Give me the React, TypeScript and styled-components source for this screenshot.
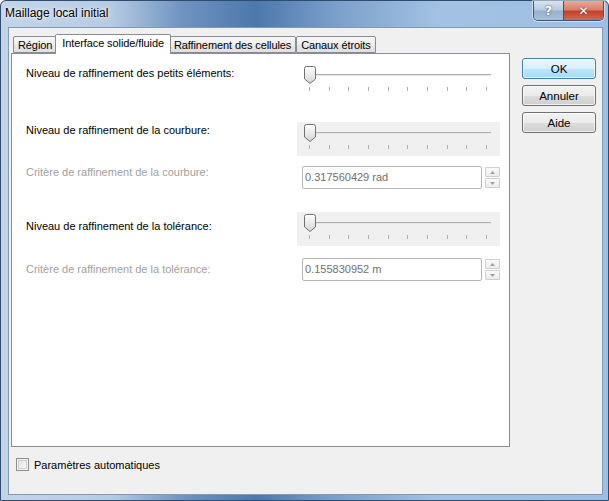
import React from "react";
import styled, { createGlobalStyle } from "styled-components";

const Global = createGlobalStyle`
  html, body { margin: 0; padding: 0; width: 609px; height: 501px; overflow: hidden; }
  body { font-family: "Liberation Sans", Arial, sans-serif; font-size: 11px; color: #000; }
  * { box-sizing: border-box; }
`;

const Window = styled.div`
  width: 609px;
  height: 501px;
  display: flex;
  flex-direction: column;
  background: linear-gradient(90deg, #c3d4e8 0%, #b6cbe3 18%, #6e93c0 30%, #4d78ad 42%, #7a9fca 55%, #a3c2e3 72%, #9dbfe3 100%);
  border: 1px solid #2f4b70;
  border-radius: 6px 6px 0 0;
`;

const TitleBar = styled.div`
  height: 26px;
  display: flex;
  align-items: flex-start;
  justify-content: space-between;
  padding-left: 4px;
  padding-right: 4px;
`;

const Title = styled.div`
  font-family: "Liberation Sans", Arial, sans-serif;
  font-size: 12px;
  color: #000;
  margin-top: 5px;
  text-shadow: 0 0 6px rgba(255,255,255,0.9), 0 0 3px rgba(255,255,255,0.9);
`;

const CaptionGroup = styled.div`
  display: flex;
  border: 1px solid #3a5677;
  border-top: none;
  border-radius: 0 0 5px 5px;
  overflow: hidden;
  box-shadow: 0 0 0 1px rgba(255,255,255,0.5);
`;

const CaptionButton = styled.div<{ $close?: boolean }>`
  width: ${p => (p.$close ? 40 : 29)}px;
  height: 19px;
  display: flex;
  align-items: center;
  justify-content: center;
  color: #fff;
  font-weight: bold;
  font-size: 12px;
  font-family: "DejaVu Sans", sans-serif;
  text-shadow: 0 0 2px #333;
  background: ${p =>
    p.$close
      ? "linear-gradient(180deg, #e9a99b 0%, #d8806c 45%, #c2432a 55%, #cf6a4e 100%)"
      : "linear-gradient(180deg, #d9e4f1 0%, #b9cbe1 45%, #98b1cf 55%, #a9c0dc 100%)"};
  border-left: ${p => (p.$close ? "1px solid #3a5677" : "none")};
`;

const Client = styled.div`
  flex: 1;
  margin: 0 5px 5px 7px;
  background: #f0f0f0;
  border: 1px solid #8299b6;
  display: flex;
  flex-direction: column;
  padding: 6px 0 0 2px;
`;

const TopRow = styled.div`
  display: flex;
  align-items: flex-start;
`;

const TabControl = styled.div`
  width: 499px;
  display: flex;
  flex-direction: column;
`;

const TabStrip = styled.div`
  display: flex;
  align-items: flex-end;
  height: 19px;
  padding-left: 2px;
  position: relative;
  z-index: 1;
`;

const Tab = styled.div<{ $active?: boolean }>`
  height: ${p => (p.$active ? 20 : 17)}px;
  padding: ${p => (p.$active ? "2px 6px 0" : "2px 4px 0")};
  margin: ${p => (p.$active ? "0 -2px" : "0")};
  border: 1px solid #898c95;
  border-bottom: ${p => (p.$active ? "none" : "1px solid #898c95")};
  margin-bottom: ${p => (p.$active ? "-1px" : "0")};
  border-radius: 2px 2px 0 0;
  background: ${p => (p.$active ? "#ffffff" : "linear-gradient(180deg, #f6f6f6 0%, #eeeeee 50%, #e6e6e6 51%, #e0e0e0 100%)")};
  position: relative;
  z-index: ${p => (p.$active ? 2 : 1)};
  white-space: nowrap;
  letter-spacing: -0.1px;
  & + & { border-left: ${p => (p.$active ? "1px solid #898c95" : "none")}; }
`;

const Panel = styled.div`
  height: 394px;
  background: #fff;
  border: 1px solid #898c95;
  padding: 10px 9px 0 14px;
  display: flex;
  flex-direction: column;
`;

const Row = styled.div<{ $gap: number }>`
  display: grid;
  grid-template-columns: 271px 203px;
  margin-top: ${p => p.$gap}px;
`;

const Label = styled.div<{ $disabled?: boolean; $offset: number }>`
  color: ${p => (p.$disabled ? "#a0a0a0" : "#000")};
  padding-top: ${p => p.$offset}px;
  line-height: 13px;
  white-space: nowrap;
`;

const SliderBox = styled.div<{ $shaded?: boolean }>`
  position: relative;
  height: 34px;
  background: ${p => (p.$shaded ? "#f0f0f0" : "transparent")};
  padding-top: 10px;
`;

const Track = styled.div`
  margin: 0 9px 0 9px;
  height: 2px;
  border-top: 1px solid #b0b0b0;
  border-bottom: 1px solid #e6e6e6;
  background: #d6d6d6;
`;

const Ticks = styled.div`
  display: flex;
  justify-content: space-between;
  margin: 11px 13px 0 12px;
`;

const Tick = styled.span`
  width: 1px;
  height: 4px;
  background: #b0b0b0;
`;

const ThumbWrap = styled.div`
  position: absolute;
  left: 7px;
  top: 2px;
  width: 12px;
  height: 18px;
`;

const InputWrap = styled.div`
  display: flex;
  align-items: flex-start;
  padding-left: 5px;
`;

const TextBox = styled.div`
  width: 180px;
  height: 23px;
  border: 1px solid #b5b5b5;
  border-radius: 2px;
  background: #fff;
  color: #6f6f6f;
  padding: 4px 0 0 2px;
  line-height: 13px;
  font-size: 11px;
`;

const Spinner = styled.div`
  display: flex;
  flex-direction: column;
  gap: 1px;
  margin-left: 3px;
  margin-top: 1px;
`;

const SpinButton = styled.div`
  width: 15px;
  height: 10px;
  border: 1px solid #cfcfcf;
  border-radius: 1px;
  background: linear-gradient(180deg, #fafafa, #ececec);
  display: flex;
  align-items: center;
  justify-content: center;
`;

const ButtonColumn = styled.div`
  display: flex;
  flex-direction: column;
  gap: 6px;
  margin-left: 12px;
  padding-top: 24px;
`;

const PushButton = styled.div<{ $default?: boolean }>`
  width: 74px;
  height: 21px;
  border: 1px solid ${p => (p.$default ? "#3c7fb1" : "#707070")};
  border-radius: 3px;
  background: ${p =>
    p.$default
      ? "linear-gradient(180deg, #eaf6fd 0%, #d9f0fc 50%, #bee6fd 51%, #a7d9f5 100%)"
      : "linear-gradient(180deg, #f2f2f2 0%, #ebebeb 50%, #dddddd 51%, #cfcfcf 100%)"};
  box-shadow: inset 0 0 0 1px rgba(255, 255, 255, 0.7);
  display: flex;
  align-items: center;
  justify-content: center;
  font-size: 11.5px;
`;

const Footer = styled.label`
  display: flex;
  align-items: center;
  gap: 5px;
  margin: 11px 0 0 5px;
`;

const CheckBox = styled.span`
  width: 13px;
  height: 13px;
  border: 1px solid #8e8f8f;
  background: linear-gradient(135deg, #dcdcdc 0%, #f2f2f2 60%, #fbfbfb 100%);
  box-shadow: inset 0 0 0 1px #f4f4f4, inset 0 0 0 2px #cfcfcf;
`;

const Thumb = () => (
  <ThumbWrap>
    <svg width="12" height="18" viewBox="0 0 12 18">
      <defs>
        <linearGradient id="tg" x1="0" x2="0" y1="0" y2="1">
          <stop offset="0" stopColor="#ffffff" />
          <stop offset="1" stopColor="#d4d4d4" />
        </linearGradient>
      </defs>
      <path d="M0.5 2.5 Q0.5 0.5 2.5 0.5 H9.5 Q11.5 0.5 11.5 2.5 V13 L6 17.5 L0.5 13 Z" fill="url(#tg)" stroke="#707070" />
    </svg>
  </ThumbWrap>
);

const Slider = ({ shaded }: { shaded?: boolean }) => (
  <SliderBox $shaded={shaded}>
    <Track />
    <Ticks>
      {Array.from({ length: 10 }).map((_, i) => (
        <Tick key={i} />
      ))}
    </Ticks>
    <Thumb />
  </SliderBox>
);

const Arrow = ({ up }: { up?: boolean }) => (
  <svg width="5" height="3" viewBox="0 0 5 3">
    <path d={up ? "M0 3 L2.5 0 L5 3 Z" : "M0 0 L2.5 3 L5 0 Z"} fill="#a0a0a0" />
  </svg>
);

const NumberField = ({ value }: { value: string }) => (
  <InputWrap>
    <TextBox>{value}</TextBox>
    <Spinner>
      <SpinButton>
        <Arrow up />
      </SpinButton>
      <SpinButton>
        <Arrow />
      </SpinButton>
    </Spinner>
  </InputWrap>
);

export default function App() {
  return (
    <>
      <Global />
      <Window>
        <TitleBar>
          <Title>Maillage local initial</Title>
          <CaptionGroup>
            <CaptionButton>?</CaptionButton>
            <CaptionButton $close>✕</CaptionButton>
          </CaptionGroup>
        </TitleBar>
        <Client>
          <TopRow>
            <TabControl>
              <TabStrip>
                <Tab>Région</Tab>
                <Tab $active>Interface solide/fluide</Tab>
                <Tab>Raffinement des cellules</Tab>
                <Tab>Canaux étroits</Tab>
              </TabStrip>
              <Panel>
                <Row $gap={0}>
                  <Label $offset={3}>Niveau de raffinement des petits éléments:</Label>
                  <Slider />
                </Row>
                <Row $gap={24}>
                  <Label $offset={2}>Niveau de raffinement de la courbure:</Label>
                  <Slider shaded />
                </Row>
                <Row $gap={10}>
                  <Label $disabled $offset={0}>Critère de raffinement de la courbure:</Label>
                  <NumberField value="0.317560429 rad" />
                </Row>
                <Row $gap={23}>
                  <Label $offset={8}>Niveau de raffinement de la tolérance:</Label>
                  <Slider shaded />
                </Row>
                <Row $gap={12}>
                  <Label $disabled $offset={5}>Critère de raffinement de la tolérance:</Label>
                  <NumberField value="0.155830952 m" />
                </Row>
              </Panel>
            </TabControl>
            <ButtonColumn>
              <PushButton $default>OK</PushButton>
              <PushButton>Annuler</PushButton>
              <PushButton>Aide</PushButton>
            </ButtonColumn>
          </TopRow>
          <Footer>
            <CheckBox />
            Paramètres automatiques
          </Footer>
        </Client>
      </Window>
    </>
  );
}
